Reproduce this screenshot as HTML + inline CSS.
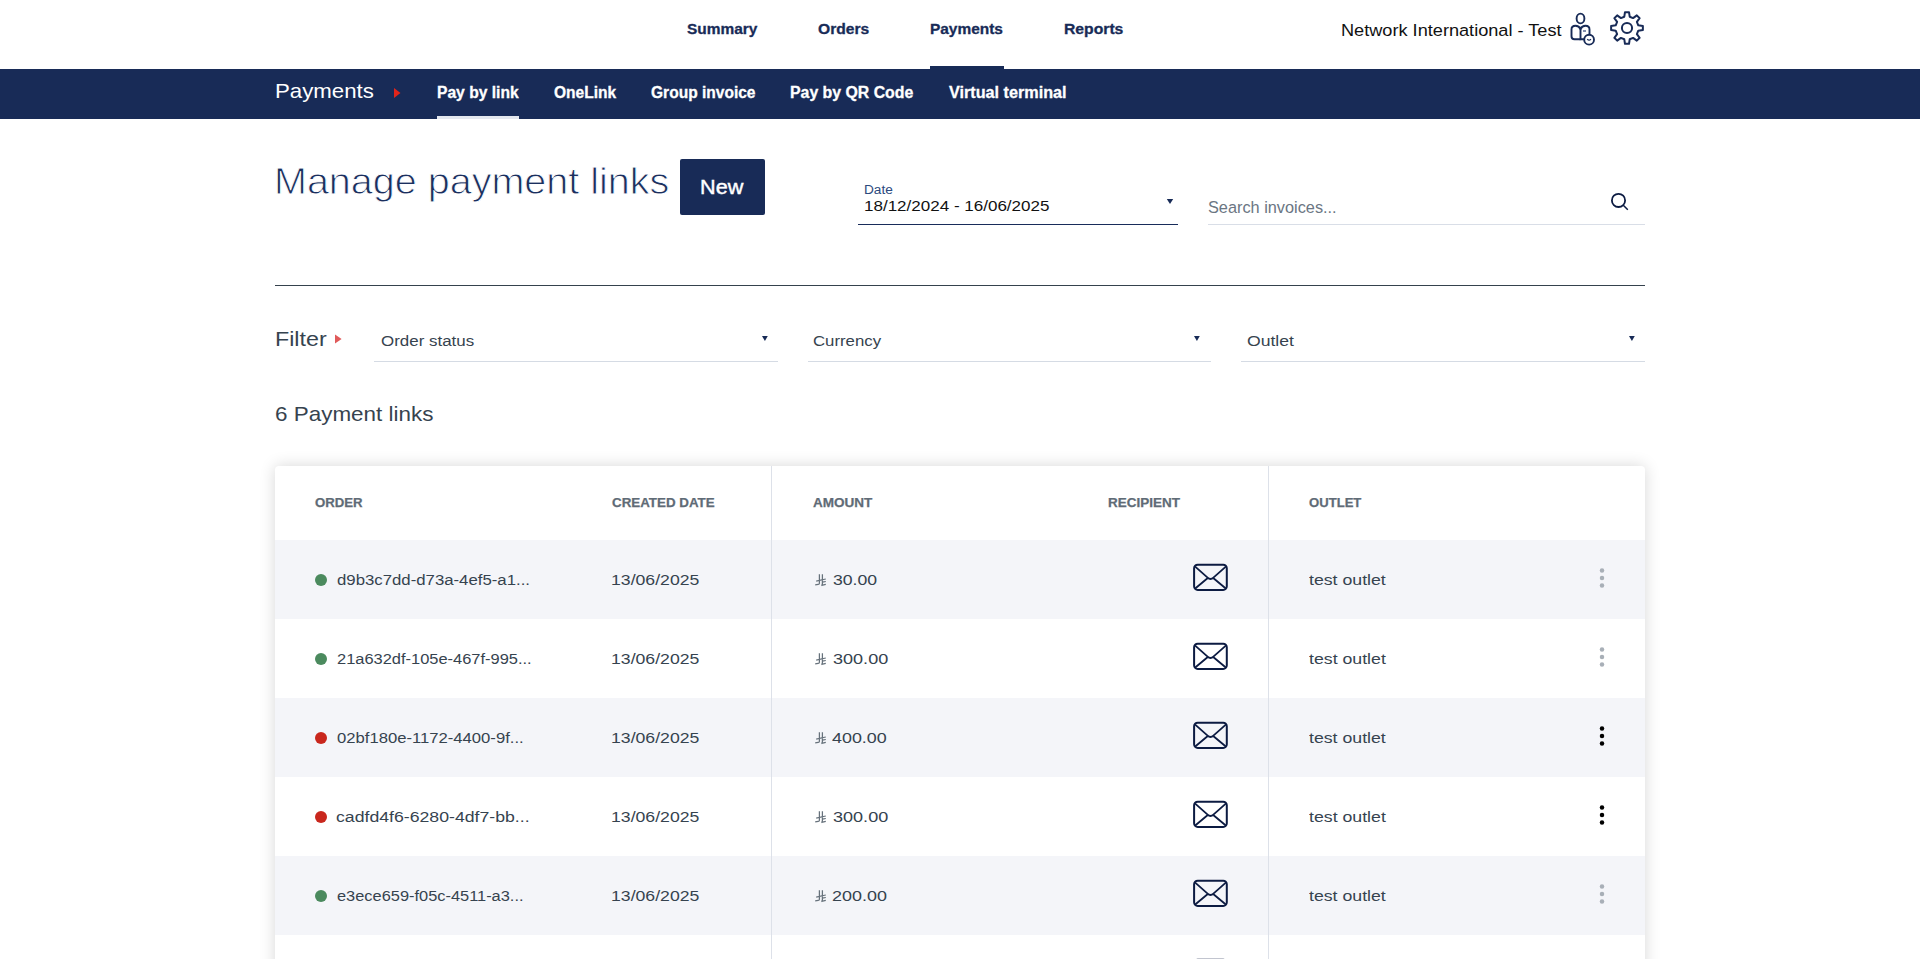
<!DOCTYPE html><html><head><meta charset="utf-8"><style>
html,body{margin:0;padding:0;background:#fff;width:1920px;height:959px;overflow:hidden;position:relative}
body{font-family:"Liberation Sans",sans-serif}
.t{position:absolute;white-space:nowrap;transform-origin:0 0}
.abs{position:absolute}
.bl{display:inline-block;width:0;height:0;vertical-align:baseline}
.env{position:absolute}
</style></head><body>
<div class="abs" style="left:0;top:69px;width:1920px;height:50px;background:#182b57"></div>
<div class="abs" style="left:930px;top:66px;width:74px;height:3px;background:#182b57"></div>
<div class="abs" style="left:437px;top:116px;width:82px;height:3px;background:#e3e7ee"></div>
<svg class="abs" style="left:390px;top:84px" width="14" height="18"><path d="M4,4 L10.5,9 L4,14Z" fill="#e1251b"/></svg>
<div class="abs" style="left:680px;top:159px;width:85px;height:56px;background:#182b57;border-radius:2px"></div>
<div class="abs" style="left:858px;top:224px;width:320px;height:1px;background:#182c5a"></div>
<svg class="abs" style="left:1164px;top:196px" width="12" height="12"><path d="M2.8,3 L9.2,3 L6,8Z" fill="#182b57"/></svg>
<div class="abs" style="left:1208px;top:224px;width:437px;height:1px;background:#d9dee7"></div>
<svg class="abs" style="left:1606px;top:188px" width="26" height="26"><circle cx="12.5" cy="12.4" r="6.6" fill="none" stroke="#0c1b42" stroke-width="1.8"/><path d="M17.3,17.3 L21.8,21.8" stroke="#0c1b42" stroke-width="1.5"/></svg>
<div class="abs" style="left:275px;top:285px;width:1370px;height:1px;background:#35424d"></div>
<svg class="abs" style="left:331px;top:331px" width="14" height="16"><path d="M4,3.6 L10.6,8 L4,12.4Z" fill="#e05a5a"/></svg>
<div class="abs" style="left:374px;top:361px;width:404px;height:1px;background:#d5dbe4"></div>
<svg class="abs" style="left:759.2px;top:333px" width="12" height="12"><path d="M3,3 L8.8,3 L5.9,8Z" fill="#182b57"/></svg>
<div class="abs" style="left:808px;top:361px;width:403px;height:1px;background:#d5dbe4"></div>
<svg class="abs" style="left:1191.2px;top:333px" width="12" height="12"><path d="M3,3 L8.8,3 L5.9,8Z" fill="#182b57"/></svg>
<div class="abs" style="left:1241px;top:361px;width:404px;height:1px;background:#d5dbe4"></div>
<svg class="abs" style="left:1625.6px;top:333px" width="12" height="12"><path d="M3,3 L8.8,3 L5.9,8Z" fill="#182b57"/></svg>
<div class="abs" style="left:275px;top:466px;width:1370px;height:600px;background:#fff;border-radius:4px;box-shadow:0 0 16px rgba(0,0,0,0.16);overflow:hidden">
<div class="abs" style="left:0;top:74px;width:1370px;height:79px;background:#f4f5f9"></div>
<div class="abs" style="left:0;top:153px;width:1370px;height:79px;background:#ffffff"></div>
<div class="abs" style="left:0;top:232px;width:1370px;height:79px;background:#f4f5f9"></div>
<div class="abs" style="left:0;top:311px;width:1370px;height:79px;background:#ffffff"></div>
<div class="abs" style="left:0;top:390px;width:1370px;height:79px;background:#f4f5f9"></div>
<div class="abs" style="left:0;top:469px;width:1370px;height:79px;background:#ffffff"></div>
<div class="abs" style="left:496px;top:0;width:1px;height:600px;background:#dde1e9"></div>
<div class="abs" style="left:993px;top:0;width:1px;height:600px;background:#dde1e9"></div>
</div>
<div class="abs" style="left:315px;top:574px;width:12px;height:12px;border-radius:50%;background:#4b8a5e"></div>
<svg class="abs" style="left:1596px;top:564px" width="12" height="28"><circle cx="6" cy="6.4" r="2.25" fill="#a8afb7"/><circle cx="6" cy="13.9" r="2.25" fill="#a8afb7"/><circle cx="6" cy="21.4" r="2.25" fill="#a8afb7"/></svg>
<svg class="abs" style="left:813px;top:572px" width="16" height="16"><path d="M6.4,2.2 L6.4,11.2 Q6.4,12.2 5.2,12.4 L2.2,12.9 M9.4,2.2 L9.4,11.6 Q9.4,13 8.4,13.6 M3.2,9.2 L12.8,7.0 M9.4,10.2 L12.8,9.5 M8.6,13.4 L12.8,12.4" stroke="#66717b" stroke-width="1.25" fill="none"/></svg>
<svg class="env" style="left:1192px;top:563px" width="37" height="29" viewBox="0 0 37 29"><rect x="2.1" y="1.7" width="32.7" height="25.2" rx="3.6" fill="none" stroke="#0c1b42" stroke-width="2"/><path d="M2.9,3.4 L15.6,14.6 Q18.5,17.4 21.4,14.6 L34.1,3.4 M2.9,25.8 L15.8,15.0 M34.1,25.8 L21.2,15.0" fill="none" stroke="#0c1b42" stroke-width="1.8" stroke-linejoin="round"/></svg>
<div class="abs" style="left:315px;top:653px;width:12px;height:12px;border-radius:50%;background:#4b8a5e"></div>
<svg class="abs" style="left:1596px;top:643px" width="12" height="28"><circle cx="6" cy="6.4" r="2.25" fill="#a8afb7"/><circle cx="6" cy="13.9" r="2.25" fill="#a8afb7"/><circle cx="6" cy="21.4" r="2.25" fill="#a8afb7"/></svg>
<svg class="abs" style="left:813px;top:651px" width="16" height="16"><path d="M6.4,2.2 L6.4,11.2 Q6.4,12.2 5.2,12.4 L2.2,12.9 M9.4,2.2 L9.4,11.6 Q9.4,13 8.4,13.6 M3.2,9.2 L12.8,7.0 M9.4,10.2 L12.8,9.5 M8.6,13.4 L12.8,12.4" stroke="#66717b" stroke-width="1.25" fill="none"/></svg>
<svg class="env" style="left:1192px;top:642px" width="37" height="29" viewBox="0 0 37 29"><rect x="2.1" y="1.7" width="32.7" height="25.2" rx="3.6" fill="none" stroke="#0c1b42" stroke-width="2"/><path d="M2.9,3.4 L15.6,14.6 Q18.5,17.4 21.4,14.6 L34.1,3.4 M2.9,25.8 L15.8,15.0 M34.1,25.8 L21.2,15.0" fill="none" stroke="#0c1b42" stroke-width="1.8" stroke-linejoin="round"/></svg>
<div class="abs" style="left:315px;top:732px;width:12px;height:12px;border-radius:50%;background:#c9271d"></div>
<svg class="abs" style="left:1596px;top:722px" width="12" height="28"><circle cx="6" cy="6.4" r="2.25" fill="#000000"/><circle cx="6" cy="13.9" r="2.25" fill="#000000"/><circle cx="6" cy="21.4" r="2.25" fill="#000000"/></svg>
<svg class="abs" style="left:813px;top:730px" width="16" height="16"><path d="M6.4,2.2 L6.4,11.2 Q6.4,12.2 5.2,12.4 L2.2,12.9 M9.4,2.2 L9.4,11.6 Q9.4,13 8.4,13.6 M3.2,9.2 L12.8,7.0 M9.4,10.2 L12.8,9.5 M8.6,13.4 L12.8,12.4" stroke="#66717b" stroke-width="1.25" fill="none"/></svg>
<svg class="env" style="left:1192px;top:721px" width="37" height="29" viewBox="0 0 37 29"><rect x="2.1" y="1.7" width="32.7" height="25.2" rx="3.6" fill="none" stroke="#0c1b42" stroke-width="2"/><path d="M2.9,3.4 L15.6,14.6 Q18.5,17.4 21.4,14.6 L34.1,3.4 M2.9,25.8 L15.8,15.0 M34.1,25.8 L21.2,15.0" fill="none" stroke="#0c1b42" stroke-width="1.8" stroke-linejoin="round"/></svg>
<div class="abs" style="left:315px;top:811px;width:12px;height:12px;border-radius:50%;background:#c9271d"></div>
<svg class="abs" style="left:1596px;top:801px" width="12" height="28"><circle cx="6" cy="6.4" r="2.25" fill="#000000"/><circle cx="6" cy="13.9" r="2.25" fill="#000000"/><circle cx="6" cy="21.4" r="2.25" fill="#000000"/></svg>
<svg class="abs" style="left:813px;top:809px" width="16" height="16"><path d="M6.4,2.2 L6.4,11.2 Q6.4,12.2 5.2,12.4 L2.2,12.9 M9.4,2.2 L9.4,11.6 Q9.4,13 8.4,13.6 M3.2,9.2 L12.8,7.0 M9.4,10.2 L12.8,9.5 M8.6,13.4 L12.8,12.4" stroke="#66717b" stroke-width="1.25" fill="none"/></svg>
<svg class="env" style="left:1192px;top:800px" width="37" height="29" viewBox="0 0 37 29"><rect x="2.1" y="1.7" width="32.7" height="25.2" rx="3.6" fill="none" stroke="#0c1b42" stroke-width="2"/><path d="M2.9,3.4 L15.6,14.6 Q18.5,17.4 21.4,14.6 L34.1,3.4 M2.9,25.8 L15.8,15.0 M34.1,25.8 L21.2,15.0" fill="none" stroke="#0c1b42" stroke-width="1.8" stroke-linejoin="round"/></svg>
<div class="abs" style="left:315px;top:890px;width:12px;height:12px;border-radius:50%;background:#4b8a5e"></div>
<svg class="abs" style="left:1596px;top:880px" width="12" height="28"><circle cx="6" cy="6.4" r="2.25" fill="#a8afb7"/><circle cx="6" cy="13.9" r="2.25" fill="#a8afb7"/><circle cx="6" cy="21.4" r="2.25" fill="#a8afb7"/></svg>
<svg class="abs" style="left:813px;top:888px" width="16" height="16"><path d="M6.4,2.2 L6.4,11.2 Q6.4,12.2 5.2,12.4 L2.2,12.9 M9.4,2.2 L9.4,11.6 Q9.4,13 8.4,13.6 M3.2,9.2 L12.8,7.0 M9.4,10.2 L12.8,9.5 M8.6,13.4 L12.8,12.4" stroke="#66717b" stroke-width="1.25" fill="none"/></svg>
<svg class="env" style="left:1192px;top:879px" width="37" height="29" viewBox="0 0 37 29"><rect x="2.1" y="1.7" width="32.7" height="25.2" rx="3.6" fill="none" stroke="#0c1b42" stroke-width="2"/><path d="M2.9,3.4 L15.6,14.6 Q18.5,17.4 21.4,14.6 L34.1,3.4 M2.9,25.8 L15.8,15.0 M34.1,25.8 L21.2,15.0" fill="none" stroke="#0c1b42" stroke-width="1.8" stroke-linejoin="round"/></svg>
<svg class="env" style="left:1192px;top:958px" width="37" height="29" viewBox="0 0 37 29"><rect x="2.1" y="1.7" width="32.7" height="25.2" rx="3.6" fill="none" stroke="#0c1b42" stroke-width="2"/><path d="M2.9,3.4 L15.6,14.6 Q18.5,17.4 21.4,14.6 L34.1,3.4 M2.9,25.8 L15.8,15.0 M34.1,25.8 L21.2,15.0" fill="none" stroke="#0c1b42" stroke-width="1.8" stroke-linejoin="round"/></svg>
<svg class="abs" style="left:1566px;top:8px" width="36" height="40" viewBox="0 0 36 40">
<ellipse cx="14.5" cy="10.5" rx="3.9" ry="4.9" fill="none" stroke="#182b57" stroke-width="1.9"/>
<path d="M14.5,31.3 L8.5,31.3 Q5.5,31.3 5.5,28.3 L5.5,21.5 Q5.5,17.8 9.5,17.8 Q13,17.8 14.5,21 Q16,17.8 19.5,17.8 Q23.5,17.8 23.5,21.5 L23.5,27" fill="none" stroke="#182b57" stroke-width="1.9"/>
<path d="M14.5,21 L14.5,31.3 L18.5,31.3" fill="none" stroke="#182b57" stroke-width="1.9"/>
<path d="M17.0,23.0 L20.0,23.0" stroke="#5a6a92" stroke-width="1.5"/>
<circle cx="23.1" cy="31.7" r="4.9" fill="#fff" stroke="#182b57" stroke-width="1.9"/>
<path d="M21.2,31.2 Q23.1,33.2 25,31.2" fill="none" stroke="#182b57" stroke-width="1.1"/>
</svg>
<svg class="abs" style="left:1609px;top:10px" width="36" height="36"><path d="M15.29,6.72 L15.99,2.13 L20.01,2.13 L20.71,6.72 L24.06,8.11 L27.81,5.36 L30.64,8.19 L27.89,11.94 L29.28,15.29 L33.87,15.99 L33.87,20.01 L29.28,20.71 L27.89,24.06 L30.64,27.81 L27.81,30.64 L24.06,27.89 L20.71,29.28 L20.01,33.87 L15.99,33.87 L15.29,29.28 L11.94,27.89 L8.19,30.64 L5.36,27.81 L8.11,24.06 L6.72,20.71 L2.13,20.01 L2.13,15.99 L6.72,15.29 L8.11,11.94 L5.36,8.19 L8.19,5.36 L11.94,8.11Z" fill="none" stroke="#182b57" stroke-width="2" stroke-linejoin="round"/><circle cx="18" cy="18" r="5.1" fill="none" stroke="#182b57" stroke-width="2"/></svg>
<div id="nav1" class="t" style="left:686.64px;top:18.90px;font-size:15.29px;line-height:20px;font-weight:bold;color:#182b57;transform:scaleX(1.0109);-webkit-text-stroke:0.3px #182b57">Summary<span class="bl"></span></div>
<div id="nav2" class="t" style="left:817.74px;top:18.90px;font-size:15.29px;line-height:20px;font-weight:bold;color:#182b57;transform:scaleX(1.0213);-webkit-text-stroke:0.3px #182b57">Orders<span class="bl"></span></div>
<div id="nav3" class="t" style="left:930.42px;top:18.90px;font-size:15.29px;line-height:20px;font-weight:bold;color:#182b57;transform:scaleX(1.0097);-webkit-text-stroke:0.3px #182b57">Payments<span class="bl"></span></div>
<div id="nav4" class="t" style="left:1064.15px;top:18.90px;font-size:15.29px;line-height:20px;font-weight:bold;color:#182b57;transform:scaleX(1.0279);-webkit-text-stroke:0.3px #182b57">Reports<span class="bl"></span></div>
<div id="acct" class="t" style="left:1341.26px;top:19.90px;font-size:16.86px;line-height:22px;font-weight:normal;color:#111111;transform:scaleX(1.0765);">Network International - Test<span class="bl"></span></div>
<div id="sub0" class="t" style="left:274.56px;top:77.20px;font-size:21.00px;line-height:27px;font-weight:normal;color:#ffffff;transform:scaleX(1.0592);">Payments<span class="bl"></span></div>
<div id="sub1" class="t" style="left:437.11px;top:82.20px;font-size:16.00px;line-height:21px;font-weight:bold;color:#ffffff;transform:scaleX(0.9768);-webkit-text-stroke:0.3px #fff">Pay by link<span class="bl"></span></div>
<div id="sub2" class="t" style="left:554.33px;top:82.20px;font-size:16.00px;line-height:21px;font-weight:bold;color:#ffffff;transform:scaleX(0.9714);-webkit-text-stroke:0.3px #fff">OneLink<span class="bl"></span></div>
<div id="sub3" class="t" style="left:650.89px;top:82.20px;font-size:16.00px;line-height:21px;font-weight:bold;color:#ffffff;transform:scaleX(0.9716);-webkit-text-stroke:0.3px #fff">Group invoice<span class="bl"></span></div>
<div id="sub4" class="t" style="left:789.90px;top:82.20px;font-size:16.00px;line-height:21px;font-weight:bold;color:#ffffff;transform:scaleX(0.9903);-webkit-text-stroke:0.3px #fff">Pay by QR Code<span class="bl"></span></div>
<div id="sub5" class="t" style="left:948.94px;top:82.20px;font-size:16.00px;line-height:21px;font-weight:bold;color:#ffffff;transform:scaleX(1.0119);-webkit-text-stroke:0.3px #fff">Virtual terminal<span class="bl"></span></div>
<div id="title" class="t" style="left:273.58px;top:158.00px;font-size:37.14px;line-height:47px;font-weight:normal;color:#1b2f5e;transform:scaleX(1.0640);-webkit-text-stroke:0.9px #fff">Manage payment links<span class="bl"></span></div>
<div id="newb" class="t" style="left:700.34px;top:173.21px;font-size:20.86px;line-height:27px;font-weight:normal;color:#ffffff;transform:scaleX(1.0373);-webkit-text-stroke:0.45px #fff">New<span class="bl"></span></div>
<div id="datel" class="t" style="left:863.88px;top:181.75px;font-size:12.21px;line-height:16px;font-weight:normal;color:#2b4a7e;transform:scaleX(1.1180);">Date<span class="bl"></span></div>
<div id="datev" class="t" style="left:863.50px;top:196.01px;font-size:15.43px;line-height:20px;font-weight:normal;color:#111111;transform:scaleX(1.1033);">18/12/2024 - 16/06/2025<span class="bl"></span></div>
<div id="search" class="t" style="left:1207.96px;top:197.91px;font-size:15.71px;line-height:20px;font-weight:normal;color:#6b7683;transform:scaleX(1.0379);">Search invoices...<span class="bl"></span></div>
<div id="filter" class="t" style="left:275.35px;top:326.81px;font-size:20.00px;line-height:25px;font-weight:normal;color:#36434f;transform:scaleX(1.1628);">Filter<span class="bl"></span></div>
<div id="f1" class="t" style="left:380.68px;top:330.81px;font-size:15.43px;line-height:20px;font-weight:normal;color:#36434f;transform:scaleX(1.0980);">Order status<span class="bl"></span></div>
<div id="f2" class="t" style="left:813.29px;top:330.81px;font-size:15.43px;line-height:20px;font-weight:normal;color:#36434f;transform:scaleX(1.0879);">Currency<span class="bl"></span></div>
<div id="f3" class="t" style="left:1247.16px;top:330.81px;font-size:15.43px;line-height:20px;font-weight:normal;color:#36434f;transform:scaleX(1.1413);">Outlet<span class="bl"></span></div>
<div id="count" class="t" style="left:275.04px;top:401.01px;font-size:20.57px;line-height:26px;font-weight:normal;color:#36434f;transform:scaleX(1.0919);">6 Payment links<span class="bl"></span></div>
<div id="h1" class="t" style="left:315.49px;top:493.91px;font-size:12.86px;line-height:17px;font-weight:bold;color:#5f6b76;transform:scaleX(1.0254);-webkit-text-stroke:0.25px #5f6b76">ORDER<span class="bl"></span></div>
<div id="h2" class="t" style="left:612.38px;top:493.91px;font-size:12.86px;line-height:17px;font-weight:bold;color:#5f6b76;transform:scaleX(1.0381);-webkit-text-stroke:0.25px #5f6b76">CREATED DATE<span class="bl"></span></div>
<div id="h3" class="t" style="left:812.77px;top:493.91px;font-size:12.86px;line-height:17px;font-weight:bold;color:#5f6b76;transform:scaleX(1.0523);-webkit-text-stroke:0.25px #5f6b76">AMOUNT<span class="bl"></span></div>
<div id="h4" class="t" style="left:1107.97px;top:493.91px;font-size:12.86px;line-height:17px;font-weight:bold;color:#5f6b76;transform:scaleX(1.0477);-webkit-text-stroke:0.25px #5f6b76">RECIPIENT<span class="bl"></span></div>
<div id="h5" class="t" style="left:1309.39px;top:493.91px;font-size:12.86px;line-height:17px;font-weight:bold;color:#5f6b76;transform:scaleX(1.0180);-webkit-text-stroke:0.25px #5f6b76">OUTLET<span class="bl"></span></div>
<div id="r0o" class="t" style="left:336.74px;top:569.82px;font-size:15.29px;line-height:20px;font-weight:normal;color:#36434f;transform:scaleX(1.0972);">d9b3c7dd-d73a-4ef5-a1...<span class="bl"></span></div>
<div id="r0d" class="t" style="left:611.14px;top:569.82px;font-size:15.29px;line-height:20px;font-weight:normal;color:#36434f;transform:scaleX(1.1552);">13/06/2025<span class="bl"></span></div>
<div id="r0a" class="t" style="left:832.74px;top:569.82px;font-size:15.29px;line-height:20px;font-weight:normal;color:#36434f;transform:scaleX(1.1531);">30.00<span class="bl"></span></div>
<div id="r0t" class="t" style="left:1309.06px;top:569.82px;font-size:15.29px;line-height:20px;font-weight:normal;color:#36434f;transform:scaleX(1.1585);">test outlet<span class="bl"></span></div>
<div id="r1o" class="t" style="left:337.04px;top:648.82px;font-size:15.29px;line-height:20px;font-weight:normal;color:#36434f;transform:scaleX(1.0758);">21a632df-105e-467f-995...<span class="bl"></span></div>
<div id="r1d" class="t" style="left:611.08px;top:648.82px;font-size:15.29px;line-height:20px;font-weight:normal;color:#36434f;transform:scaleX(1.1552);">13/06/2025<span class="bl"></span></div>
<div id="r1a" class="t" style="left:832.63px;top:648.82px;font-size:15.29px;line-height:20px;font-weight:normal;color:#36434f;transform:scaleX(1.1814);">300.00<span class="bl"></span></div>
<div id="r1t" class="t" style="left:1308.90px;top:648.82px;font-size:15.29px;line-height:20px;font-weight:normal;color:#36434f;transform:scaleX(1.1594);">test outlet<span class="bl"></span></div>
<div id="r2o" class="t" style="left:336.61px;top:727.82px;font-size:15.29px;line-height:20px;font-weight:normal;color:#36434f;transform:scaleX(1.0894);">02bf180e-1172-4400-9f...<span class="bl"></span></div>
<div id="r2d" class="t" style="left:611.14px;top:727.82px;font-size:15.29px;line-height:20px;font-weight:normal;color:#36434f;transform:scaleX(1.1552);">13/06/2025<span class="bl"></span></div>
<div id="r2a" class="t" style="left:832.36px;top:727.82px;font-size:15.29px;line-height:20px;font-weight:normal;color:#36434f;transform:scaleX(1.1706);">400.00<span class="bl"></span></div>
<div id="r2t" class="t" style="left:1309.06px;top:727.82px;font-size:15.29px;line-height:20px;font-weight:normal;color:#36434f;transform:scaleX(1.1585);">test outlet<span class="bl"></span></div>
<div id="r3o" class="t" style="left:336.38px;top:806.82px;font-size:15.29px;line-height:20px;font-weight:normal;color:#36434f;transform:scaleX(1.1564);">cadfd4f6-6280-4df7-bb...<span class="bl"></span></div>
<div id="r3d" class="t" style="left:611.08px;top:806.82px;font-size:15.29px;line-height:20px;font-weight:normal;color:#36434f;transform:scaleX(1.1552);">13/06/2025<span class="bl"></span></div>
<div id="r3a" class="t" style="left:832.63px;top:806.82px;font-size:15.29px;line-height:20px;font-weight:normal;color:#36434f;transform:scaleX(1.1814);">300.00<span class="bl"></span></div>
<div id="r3t" class="t" style="left:1308.90px;top:806.82px;font-size:15.29px;line-height:20px;font-weight:normal;color:#36434f;transform:scaleX(1.1594);">test outlet<span class="bl"></span></div>
<div id="r4o" class="t" style="left:337.00px;top:885.82px;font-size:15.29px;line-height:20px;font-weight:normal;color:#36434f;transform:scaleX(1.0727);">e3ece659-f05c-4511-a3...<span class="bl"></span></div>
<div id="r4d" class="t" style="left:611.14px;top:885.82px;font-size:15.29px;line-height:20px;font-weight:normal;color:#36434f;transform:scaleX(1.1552);">13/06/2025<span class="bl"></span></div>
<div id="r4a" class="t" style="left:832.25px;top:885.82px;font-size:15.29px;line-height:20px;font-weight:normal;color:#36434f;transform:scaleX(1.1746);">200.00<span class="bl"></span></div>
<div id="r4t" class="t" style="left:1309.06px;top:885.82px;font-size:15.29px;line-height:20px;font-weight:normal;color:#36434f;transform:scaleX(1.1585);">test outlet<span class="bl"></span></div>
</body></html>
